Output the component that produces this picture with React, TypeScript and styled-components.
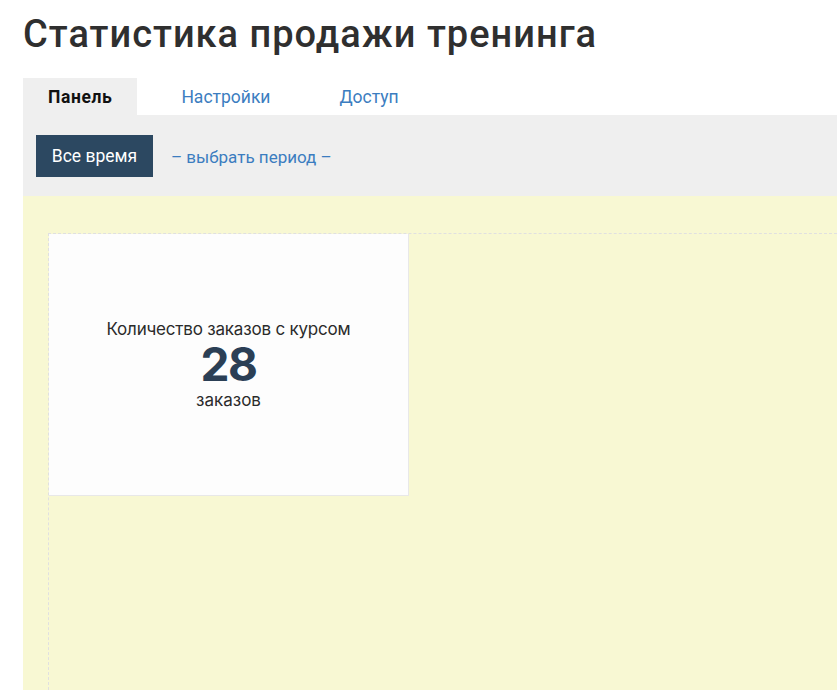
import * as React from 'react';
import styled, { createGlobalStyle } from 'styled-components';

const colors = {
  text: '#333333',
  link: '#3b7dc0',
  navy: '#2c4861',
  gray: '#efefef',
  yellow: '#f8f8d3',
  dashed: '#e0e0e0',
  cardBorder: '#e8e8e8'
};

const GlobalStyle = createGlobalStyle`
  html, body {
    margin: 0;
    padding: 0;
    background: #ffffff;
    height: 100%;
    overflow: hidden;
  }

  body {
    font-family: Roboto, "Liberation Sans", sans-serif;
    color: ${colors.text};
  }
`;

const Page = styled.div`
  display: flex;
  flex-direction: column;
  height: 690px;
  padding-left: 23px;
  box-sizing: border-box;
`;

const Title = styled.h1`
  margin: 8px 0 0;
  height: 70px;
  font-size: 38px;
  font-weight: 500;
  line-height: 52px;
  color: #2f2f2f;
  letter-spacing: 1px;
`;

const Tabs = styled.div`
  display: flex;
  gap: 19px;
  height: 37px;
`;

const Tab = styled.div<{ active?: boolean }>`
  display: flex;
  align-items: center;
  padding: 0 25px;
  font-size: 17.5px;
  font-weight: ${p => (p.active ? 700 : 400)};
  letter-spacing: ${p => (p.active ? '0.6px' : '0')};
  color: ${p => (p.active ? '#111111' : colors.link)};
  background: ${p => (p.active ? colors.gray : 'transparent')};
  cursor: pointer;
`;

const Toolbar = styled.div`
  display: flex;
  align-items: center;
  gap: 18px;
  height: 81px;
  padding-left: 13px;
  background: ${colors.gray};
`;

const Button = styled.button`
  height: 42px;
  width: 117px;
  margin-top: 1px;
  padding: 0;
  border: 0;
  background: ${colors.navy};
  color: #ffffff;
  font-family: Roboto, "Liberation Sans", sans-serif;
  font-size: 17.5px;
`;

const PeriodLink = styled.a`
  margin-top: 2px;
  color: ${colors.link};
  font-size: 17px;
  text-decoration: none;
  cursor: pointer;
`;

const Dashboard = styled.div`
  flex: 1;
  display: flex;
  padding: 37px 0 0 25px;
  background: ${colors.yellow};
`;

const Grid = styled.div`
  flex: 1;
  display: grid;
  grid-template-columns: 360px;
  grid-auto-rows: 262px;
  border-top: 1px dashed ${colors.dashed};
  border-left: 1px dashed ${colors.dashed};
`;

const Widget = styled.div`
  display: flex;
  flex-direction: column;
  align-items: center;
  justify-content: center;
  background: #fdfdfd;
  border: 1px solid ${colors.cardBorder};
  border-top: 0;
  border-left: 0;
  font-family: Inter, "Noto Sans", sans-serif;
  color: #2b2b2b;
`;

const WidgetLabel = styled.div`
  font-size: 17px;
  line-height: 22px;
  letter-spacing: -0.2px;
`;

const WidgetValue = styled.div`
  font-size: 46px;
  font-weight: 700;
  line-height: 48px;
  color: #2b3f55;
  letter-spacing: -1.5px;
`;

const WidgetUnit = styled.div`
  font-size: 17px;
  line-height: 24px;
`;

const tabs = ['Панель', 'Настройки', 'Доступ'];

function App() {
  return (
    <Page>
      <GlobalStyle />
      <Title>Статистика продажи тренинга</Title>
      <Tabs>
        {tabs.map((tab, index) => (
          <Tab key={tab} active={index === 0}>
            {tab}
          </Tab>
        ))}
      </Tabs>
      <Toolbar>
        <Button>Все время</Button>
        <PeriodLink>– выбрать период –</PeriodLink>
      </Toolbar>
      <Dashboard>
        <Grid>
          <Widget>
            <WidgetLabel>Количество заказов с курсом</WidgetLabel>
            <WidgetValue>28</WidgetValue>
            <WidgetUnit>заказов</WidgetUnit>
          </Widget>
        </Grid>
      </Dashboard>
    </Page>
  );
}

export default App;
